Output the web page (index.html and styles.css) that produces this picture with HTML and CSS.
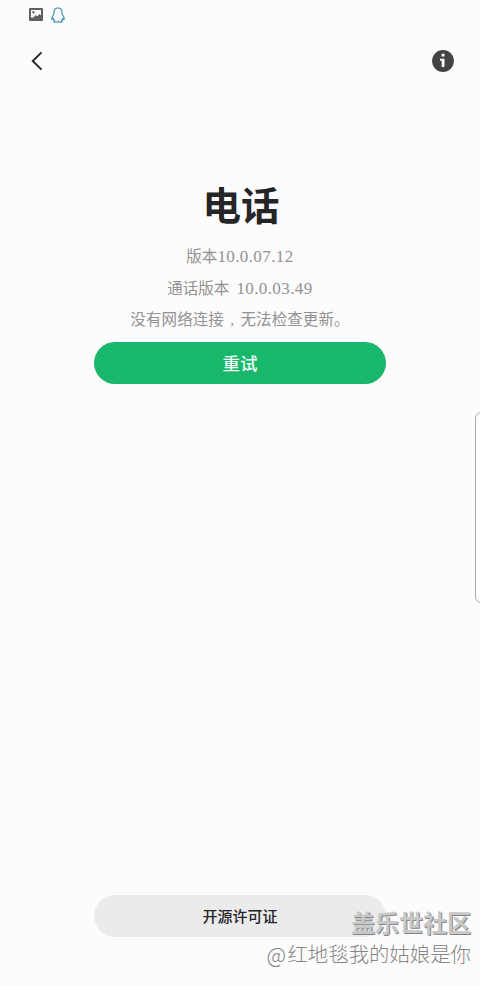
FILE: index.html
```html
<!DOCTYPE html>
<html lang="zh-CN">
<head>
<meta charset="utf-8">
<title>电话</title>
<link rel="stylesheet" href="styles.css">
</head>
<body>
<div class="screen">
  <div class="status">
    <svg width="14" height="13" viewBox="0 0 14 13"><rect width="14" height="13" rx="1" fill="#606060"/><path d="M2 2h10v5.500L10.800 6 8 8.200 6.500 7 4.500 9.500H2z" fill="#fcfcfc"/><path d="M3.300 3.300h2.200v1.400L4.400 5.700 3.300 4.700z" fill="#606060"/></svg>
    <svg width="14" height="16" viewBox="0 0 14 16"><path d="M7 1C4.400 1 3 2.700 3 5.200V7C1.700 8.600.7 10.400.8 12c.1.900.8.600 1.500-.4.200.9.700 1.500 1.300 2-.9.300-.9 1.400 0 1.500 1.200.2 2.400 0 3.400-.6 1 .6 2.200.8 3.400.6.900-.1.900-1.200 0-1.500.6-.5 1.100-1.100 1.300-2 .7 1 1.400 1.300 1.500.4.100-1.600-.9-3.400-2.200-5V5.200C11 2.700 9.600 1 7 1z" fill="none" stroke="#3488a8" stroke-width="1.100"/></svg>
  </div>
  <header class="bar">
    <svg width="12" height="20" viewBox="0 0 12 20"><path d="M10.500 1.400 1.700 10l8.800 8.600" fill="none" stroke="#252528" stroke-width="1.900"/></svg>
    <svg width="22" height="22" viewBox="0 0 22 22"><circle cx="11" cy="11" r="10.900" fill="#434343"/><path d="M9.600 3.800h2.900v2.800H9.600zM8 8.700h4.500V17H9.700v-6.200H8z" fill="#fcfcfc"/></svg>
  </header>
  <main class="info">
    <h1>电话</h1>
    <p>版本<span class="num">10.0.07.12</span></p>
    <p>通话版本<span class="num second">10.0.03.49</span></p>
    <p class="message">没有网络连接<span class="comma">,</span>无法检查更新。</p>
    <button class="retry">重试</button>
  </main>
  <button class="license">开源许可证</button>
  <div class="edge"></div>
  <div class="watermark"><strong>盖乐世社区</strong><span class="author"><span class="at">@</span>红地毯我的姑娘是你</span></div>
</div>
</body>
</html>
```
FILE: styles.css
```css
* { box-sizing: border-box; }
body { margin: 0; background: #fcfcfc; }
.screen {
  position: relative;
  display: flex;
  flex-direction: column;
  align-items: center;
  height: 986px;
  padding-bottom: 49px;
  overflow: hidden;
  background: #fcfcfc;
  color: #252528;
  font-family: "Liberation Serif", "Noto Sans CJK SC", serif;
}
svg { display: block; }
.status { display: flex; align-items: center; gap: 8px; width: 100%; height: 29px; padding-left: 29px; }
.bar { display: flex; align-items: center; justify-content: space-between; width: 100%; height: 63px; padding: 0 26px 0 31px; }
.info { display: flex; flex-direction: column; align-items: center; width: 100%; padding-top: 90px; }
h1 { margin: 0 0 9px; padding-left: 2px; font-size: 38.500px; line-height: 50px; font-weight: 700; }
p { display: flex; justify-content: center; margin: 0; height: 31.500px; font-size: 15.500px; line-height: 31.500px; color: #929292; white-space: nowrap; }
.num { font-size: 17px; letter-spacing: .4px; }
.second { margin-left: 7px; }
.comma { width: 16.500px; text-align: center; }
.message { letter-spacing: .1px; }
button { width: 292px; height: 42px; flex: none; padding: 0 0 1px; border: 0; border-radius: 21px; font-family: inherit; }
.retry { margin-top: 6px; background: #18b76c; color: #f2fff8; font-size: 17.500px; font-weight: 500; }
.license { margin-top: auto; padding-bottom: 2px; background: #ebebeb; color: #252528; font-size: 15px; font-weight: 500; }
.edge { position: absolute; top: 412px; right: -10px; width: 15px; height: 191px; border: 1px solid #acacac; border-radius: 6px; }
.watermark { position: absolute; right: 9px; bottom: 17px; display: flex; flex-direction: column; align-items: flex-end; font-family: "Noto Sans CJK SC", sans-serif; color: #858585; white-space: nowrap; }
.watermark strong { font-size: 24px; line-height: 32px; color: #c8c8c8; text-shadow: 1px 1px 0 #858585; }
.author { display: flex; font-size: 20.400px; line-height: 31px; font-weight: 300; }
.at { width: 21px; font-size: 21.500px; }
```
